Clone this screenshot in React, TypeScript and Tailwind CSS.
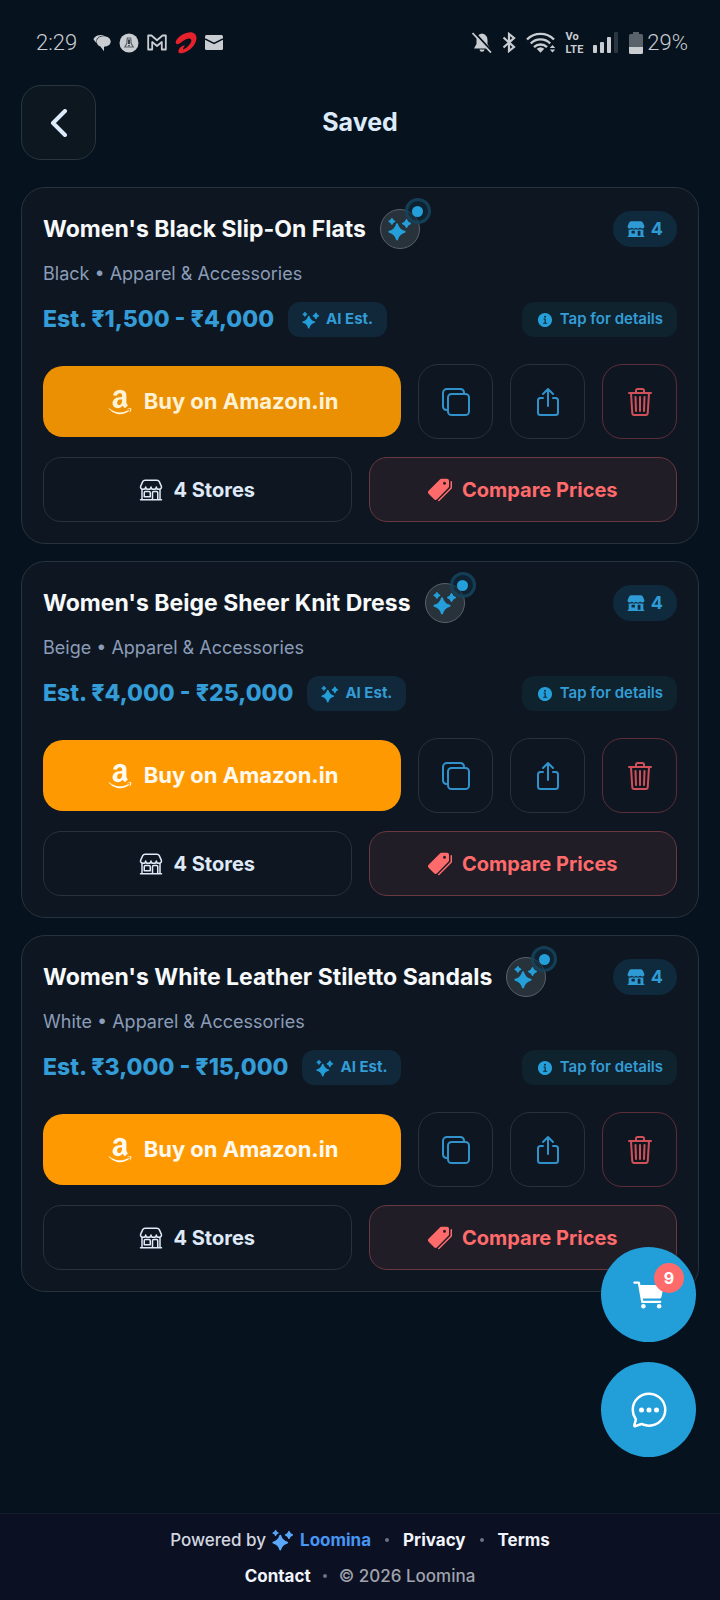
import {
  IoCart,
  IoChatbubbleEllipsesOutline,
  IoCopyOutline,
  IoInformationCircle,
  IoLogoAmazon,
  IoPricetags,
  IoShareOutline,
  IoStorefront,
  IoStorefrontOutline,
  IoTrashOutline,
} from 'react-icons/io5';

interface SavedItem {
  id: number;
  title: string;
  color: string;
  category: string;
  price: string;
  stores: number;
  pressed?: boolean;
}

const savedItems: SavedItem[] = [
  {
    id: 1,
    title: "Women's Black Slip-On Flats",
    color: 'Black',
    category: 'Apparel & Accessories',
    price: '₹1,500 - ₹4,000',
    stores: 4,
    pressed: true,
  },
  {
    id: 2,
    title: "Women's Beige Sheer Knit Dress",
    color: 'Beige',
    category: 'Apparel & Accessories',
    price: '₹4,000 - ₹25,000',
    stores: 4,
  },
  {
    id: 3,
    title: "Women's White Leather Stiletto Sandals",
    color: 'White',
    category: 'Apparel & Accessories',
    price: '₹3,000 - ₹15,000',
    stores: 4,
  },
];

function SparklesIcon({ className }: { className: string }) {
  return (
    <svg viewBox="0 0 24 24" className={className} fill="currentColor" stroke="currentColor" strokeLinejoin="round">
      <path d="M9 7.200Q10.600 13.200 16.600 14.800 10.600 16.400 9 22.400 7.400 16.400 1.400 14.800 7.400 13.200 9 7.200Z" strokeWidth="2" />
      <path d="M3.900 1.500Q4.600 3.700 6.800 4.400 4.600 5.100 3.900 7.300 3.200 5.100 1 4.400 3.200 3.700 3.900 1.500Z" strokeWidth="1.200" />
      <path d="M18.500 2.700Q19.400 5.500 22.300 6.500 19.400 7.500 18.500 10.300 17.600 7.500 14.700 6.500 17.600 5.500 18.500 2.700Z" strokeWidth="1.400" />
    </svg>
  );
}

function StatusBar() {
  return (
    <div className="flex h-[85px] items-center justify-between pl-9 pr-8 font-['Roboto',sans-serif] text-[22px] text-[#c9cdd2]">
      <div className="flex items-center gap-2">
        <span className="mr-2 font-light">2:29</span>
        {/* Chat */}
        <svg width="18" height="18" viewBox="0 0 18 18" fill="currentColor">
          <path d="M.5 5.500C1.500 1.800 6 .6 11.500 1.200 8 1.500 4.600 2.800 3.500 5.800V9.200L1.800 7Z" />
          <path d="M10.500 2.200c4.200 0 7.200 2.200 7.200 5.400 0 3-2.900 5-6.700 5.200v4.400L7.400 12.400C5 11.600 3.800 10 3.800 7.700c0-3.300 2.900-5.500 6.700-5.500Z" />
        </svg>
        {/* Alert */}
        <svg width="20" height="20" viewBox="0 0 20 20">
          <circle cx="10" cy="10" r="9.500" fill="currentColor" />
          <path d="M8.300 5h3.400l.5 5.500 2 3.500H5.800l2-3.500Z" fill="none" stroke="#59616a" strokeWidth="1.200" />
          <path d="M10 6.500v4.500M10 12.300v1" stroke="#26303a" strokeWidth="1.800" />
        </svg>
        {/* Mail */}
        <svg width="20" height="17" viewBox="0 0 20 17" fill="none" stroke="currentColor" strokeWidth="1.800">
          <path d="M1.200 15.500V1.500h3.300L10 6.300l5.500-4.800h3.300v14h-4V8L10 12 5.200 8v7.500Z" strokeLinejoin="round" />
        </svg>
        {/* Carrier */}
        <svg width="22" height="22" viewBox="0 0 22 22" fill="#e5222b">
          <path d="M.7 10.800C.5 7.500 6 1.500 14 .4c5-.6 8 2.300 7.400 6.800-.8 6.200-7 12.400-14.500 14-3.300.6-4.500-1.700-2.800-4.300 1.300-2 3.700-3.500 5.800-3.300-.6 1.400-2.200 2.700-1.900 3.600.5 1.200 7.700-4 8.300-8.100.4-3-2.500-3.300-5.800-1.700-2.300 1.100-4.200 2.900-6.200 4.200-1.700 1-3.400.7-3.600-.8Z" />
        </svg>
        {/* Envelope */}
        <svg width="18" height="15" viewBox="0 0 18 15">
          <rect width="18" height="15" rx="1.500" fill="currentColor" />
          <path d="M0 4 9 8.500 18 4" fill="none" stroke="#06121d" strokeWidth="1.500" />
        </svg>
      </div>
      <div className="flex items-center gap-[10px]">
        {/* Muted */}
        <svg width="20" height="21" viewBox="0 0 20 21" fill="currentColor">
          <path d="M10 1.500c3.600.6 5.500 3 5.500 6.500V12l2.500 4.500H2L4.500 12V8C4.500 4.500 6.400 2.100 10 1.500ZM7.500 17.500h5a2.500 2.300 0 0 1-5 0Z" />
          <path d="M2 0 20 19.500" stroke="#06121d" strokeWidth="2" />
          <path d="M.5 1 19 20.500" stroke="currentColor" strokeWidth="1.800" />
        </svg>
        {/* Bluetooth */}
        <svg width="14" height="21" viewBox="0 0 14 21" fill="none" stroke="currentColor" strokeWidth="2.200">
          <path d="M1.500 5.500 12 15l-5 4V2l5 4L1.500 15.500" />
        </svg>
        {/* Wifi */}
        <svg width="30" height="21" viewBox="0 0 30 21" fill="none" stroke="currentColor" strokeWidth="2.400">
          <path d="M1 7.500a19 19 0 0 1 27 0M4.800 11.500a13.500 13.500 0 0 1 19.400 0" />
          <path d="M8 15.200a9.200 9.200 0 0 1 13 0" />
          <path d="M10.700 16.800a6 6 0 0 1 7.600 0L14.500 20.800Z" fill="currentColor" stroke="none" />
          <path d="m26.500 13 2.700 3h-5.400ZM26.500 20.500l2.700-3h-5.400Z" fill="currentColor" stroke="none" />
        </svg>
        <span className="text-[11px] font-bold leading-[13px]">
          Vo
          <br />
          LTE
        </span>
        {/* Signal */}
        <svg width="26" height="21" viewBox="0 0 26 21" fill="currentColor">
          <rect y="13" width="4" height="8" rx="1" />
          <rect x="7" y="10" width="4" height="11" rx="1" />
          <rect x="14" y="5" width="4" height="16" rx="1" />
          <rect x="21" width="4" height="21" rx="1" fill="#2b3640" />
        </svg>
        <span className="flex items-center gap-1 font-light">
          <svg width="14" height="22" viewBox="0 0 14 22">
            <path d="M4 0h6v2h2.500A1.500 1.500 0 0 1 14 3.500V15H0V3.500A1.500 1.500 0 0 1 1.500 2H4Z" fill="#59616a" />
            <path d="M0 15h14v5.500a1.500 1.500 0 0 1-1.500 1.500h-11A1.500 1.500 0 0 1 0 20.500Z" fill="currentColor" />
          </svg>
          29%
        </span>
      </div>
    </div>
  );
}

function Header() {
  return (
    <header className="grid grid-cols-[75px_1fr_75px] items-center px-[21px]">
      <button
        aria-label="Back"
        className="flex h-[75px] items-center justify-center rounded-[20px] border border-[#2a343e] bg-[#0d1720] text-[#dcebfb]"
      >
        <svg width="18" height="28" viewBox="0 0 18 28" fill="none" stroke="currentColor" strokeWidth="4" strokeLinecap="round" strokeLinejoin="round">
          <path d="M15 2 3 14l12 12" />
        </svg>
      </button>
      <h1 className="text-center text-[25px] font-bold text-[#dcebfb]">Saved</h1>
    </header>
  );
}

function SavedCard({ item }: { item: SavedItem }) {
  return (
    <article className="rounded-3xl border border-[#27323c] bg-[#0e1721] p-[21px]">
      {/* Title */}
      <div className="flex h-10 items-center justify-between">
        <div className="flex items-center gap-[14px]">
          <h2 className="text-[23px] font-bold text-[#f7f9fb]">{item.title}</h2>
          <button
            aria-label="AI insights"
            className="relative flex h-10 w-10 items-center justify-center rounded-full border border-[#59626a] bg-[#28323b] text-[#249fd9]"
          >
            <SparklesIcon className="h-6 w-6" />
            <span className="absolute -right-3 -top-3 flex h-[26px] w-[26px] items-center justify-center rounded-full border-[3px] border-[#164660]/80 bg-[#0f2a3c]/60">
              <span className="h-[11px] w-[11px] rounded-full bg-[#249fd9]" />
            </span>
          </button>
        </div>
        <span className="flex h-9 items-center gap-[6px] rounded-full bg-[#102a3d] px-[14px] text-lg font-bold text-[#2f9bd4]">
          <IoStorefront className="h-[18px] w-[18px]" />
          {item.stores}
        </span>
      </div>

      <p className="mt-[11px] text-[18px] leading-7 text-[#8b9cb8]">
        {item.color} • {item.category}
      </p>

      {/* Price */}
      <div className="mt-[14px] flex h-[35px] items-center justify-between">
        <div className="flex items-center gap-[14px]">
          <span className="text-[23px] font-extrabold text-[#349cd6]">Est. {item.price}</span>
          <span className="flex h-[35px] items-center gap-[6px] rounded-xl bg-[#10283a] px-[14px] text-[15px] font-bold text-[#349cd6]">
            <SparklesIcon className="h-[18px] w-[18px] text-[#249fd9]" />
            AI Est.
          </span>
        </div>
        <button className="flex h-[35px] items-center gap-[6px] rounded-xl bg-[#0f232f] px-[14px] text-[15px] font-semibold text-[#349cd6]">
          <IoInformationCircle className="h-[18px] w-[18px] text-[#249fd9]" />
          Tap for details
        </button>
      </div>

      {/* Actions */}
      <div className="mt-[27px] flex items-center gap-[17px]">
        <button
          className={`flex h-[71px] flex-1 items-center justify-center gap-[10px] rounded-[20px] text-[22px] font-bold ${
            item.pressed ? 'bg-[#eb8f03] text-[#fff2d4]' : 'bg-[#ff9902] text-[#fffaf0]'
          }`}
        >
          <IoLogoAmazon className="h-7 w-7" />
          Buy on Amazon.in
        </button>
        <button
          aria-label="Copy"
          className="flex h-[75px] w-[75px] items-center justify-center rounded-[20px] border border-[#27323c] text-[#3192cb]"
        >
          <IoCopyOutline className="h-8 w-8" />
        </button>
        <button
          aria-label="Share"
          className="flex h-[75px] w-[75px] items-center justify-center rounded-[20px] border border-[#27323c] text-[#3192cb]"
        >
          <IoShareOutline className="h-8 w-8" />
        </button>
        <button
          aria-label="Delete"
          className="flex h-[75px] w-[75px] items-center justify-center rounded-[20px] border border-[#5d2d37] text-[#cf5058]"
        >
          <IoTrashOutline className="h-8 w-8" />
        </button>
      </div>

      <div className="mt-[18px] grid grid-cols-2 gap-[17px] text-xl font-bold">
        <button className="flex h-[65px] items-center justify-center gap-[10px] rounded-[18px] border border-[#27323c] text-[#dfe9f7]">
          <IoStorefrontOutline className="h-6 w-6" />
          {item.stores} Stores
        </button>
        <button className="flex h-[65px] items-center justify-center gap-[10px] rounded-[18px] border border-[#693841] bg-[#211d27] text-[#ff6b6b]">
          <IoPricetags className="h-6 w-6" />
          Compare Prices
        </button>
      </div>
    </article>
  );
}

function FloatingButtons() {
  return (
    <div className="fixed bottom-[143px] right-6 flex flex-col gap-5 text-white">
      <button
        aria-label="Cart, 9 items"
        className="relative flex h-[95px] w-[95px] items-center justify-center rounded-full bg-[#229fd9]"
      >
        <IoCart className="h-9 w-9" />
        <span className="absolute right-3 top-4 flex h-[30px] w-[30px] items-center justify-center rounded-full bg-[#ff6b6b] text-base font-bold">
          9
        </span>
      </button>
      <button
        aria-label="Chat"
        className="flex h-[95px] w-[95px] items-center justify-center rounded-full bg-[#229fd9]"
      >
        <IoChatbubbleEllipsesOutline className="h-10 w-10" />
      </button>
    </div>
  );
}

function Dot() {
  return <span className="h-1 w-1 rounded-full bg-[#6b7280]" />;
}

function Footer() {
  return (
    <footer className="mt-auto border-t border-[#121d2c] bg-[#0b1022] pb-3 pt-[14px] text-[17px] font-medium leading-6 text-[#d3d7e0]">
      <div className="flex items-center justify-center gap-[14px]">
        <span className="flex items-center gap-[6px]">
          Powered by
          <SparklesIcon className="h-[22px] w-[22px] text-[#5aa7fb]" />
          <span className="font-bold text-[#4796f5]">Loomina</span>
        </span>
        <Dot />
        <a href="#privacy" className="font-bold text-[#f1f4fb]">
          Privacy
        </a>
        <Dot />
        <a href="#terms" className="font-bold text-[#f1f4fb]">
          Terms
        </a>
      </div>
      <div className="mt-3 flex items-center justify-center gap-3">
        <a href="#contact" className="font-bold text-[#f1f4fb]">
          Contact
        </a>
        <Dot />
        <span className="text-[#a0a3ad]">© 2026 Loomina</span>
      </div>
    </footer>
  );
}

function App() {
  return (
    <div className="flex min-h-screen flex-col bg-[#06121d] font-['Inter',sans-serif]">
      <StatusBar />
      <Header />
      <main className="mt-[27px] flex flex-col gap-[17px] px-[21px] pb-10">
        {savedItems.map((item) => (
          <SavedCard key={item.id} item={item} />
        ))}
      </main>
      <FloatingButtons />
      <Footer />
    </div>
  );
}

export default App;
